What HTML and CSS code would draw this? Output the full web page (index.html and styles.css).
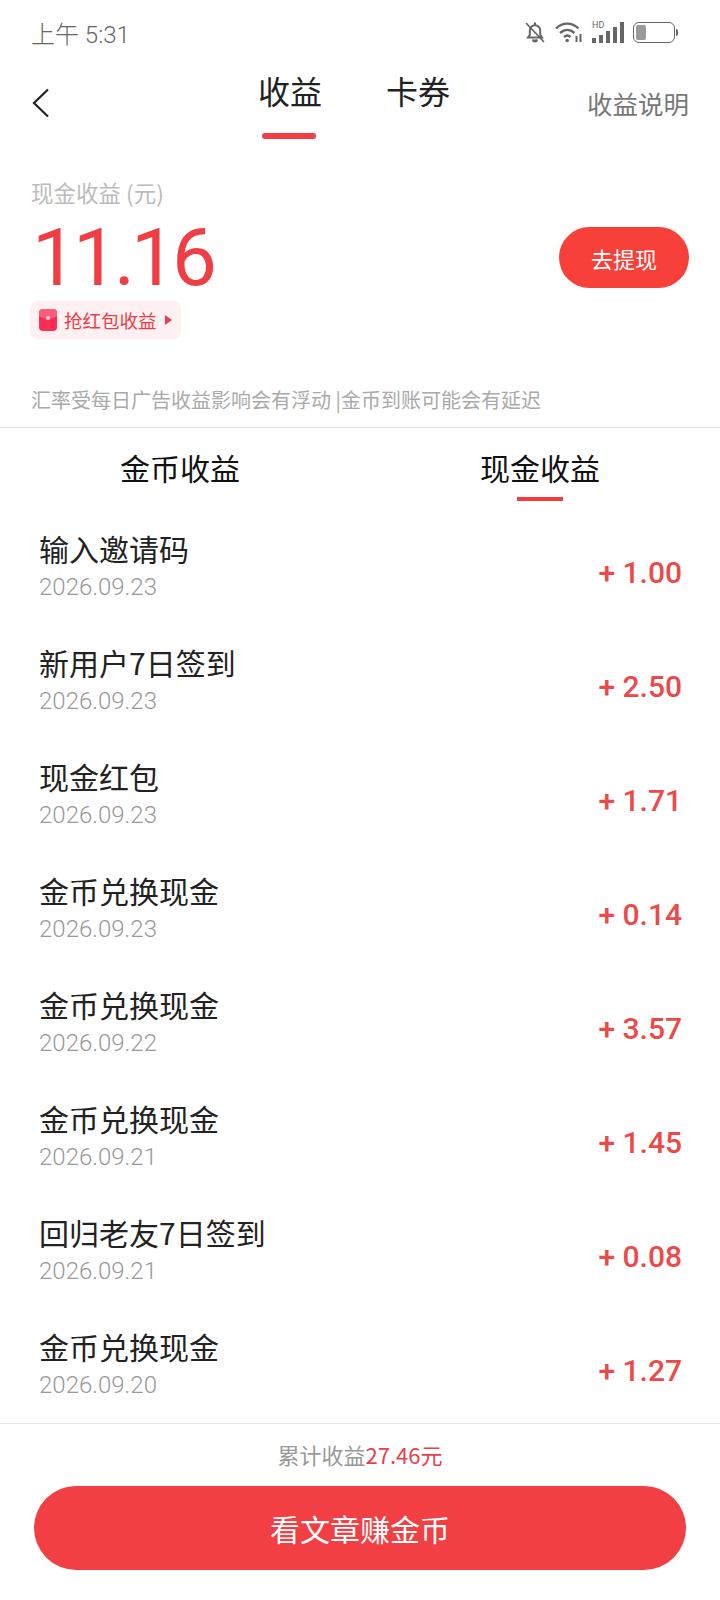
FILE: index.html
```html
<!DOCTYPE html>
<html lang="zh">
<head>
<meta charset="utf-8">
<title>收益</title>
<link rel="stylesheet" href="styles.css">
</head>
<body>
<div class="app">
  <div class="status">
    <span class="time">上午 5:31</span>
    <div class="status-icons">
      <svg class="i-bell" width="22" height="22" viewBox="0 0 22 22" fill="none" stroke="#666" stroke-width="2"><path d="M4 16.5h14l-1.8-2.6V9.5a5.2 5.2 0 0 0-10.400 0v4.400z"/><path d="M9 18.500a2 2 0 0 0 4 0" fill="#666"/><path d="M11 1.500v2.500"/><path d="M2 2l18 19" stroke-width="1.800"/></svg>
      <svg class="i-wifi" width="28" height="21" viewBox="0 0 28 21" fill="none" stroke="#666" stroke-width="2.400"><path d="M1 6.500c6.500-6.500 16-6.500 22.500 0"/><path d="M5 11c4.500-4 10-4 14.500 0"/><path d="M9 15c2-1.800 4.500-1.800 6.500 0"/><circle cx="12.200" cy="18.500" r="1.800" fill="#666" stroke="none"/><path d="M21.500 14v6M25.500 12v8" stroke-width="2"/></svg>
      <div class="signal">
        <span class="hd">HD</span>
        <i class="b1"></i><i class="b2"></i><i class="b3"></i><i class="b4"></i><i class="b5"></i>
      </div>
      <div class="battery"><span class="cell"><b></b></span><span class="nub"></span></div>
    </div>
  </div>
  <div class="nav">
    <svg class="back" width="18" height="30" viewBox="0 0 18 30" fill="none" stroke="#222" stroke-width="2.200"><path d="M16 1.500L2 15l14 13.500"/></svg>
    <div class="nav-tabs">
      <div class="nav-tab active"><span>收益</span></div>
      <div class="nav-tab"><span>卡券</span></div>
    </div>
    <span class="nav-link">收益说明</span>
  </div>
  <section class="summary">
    <div class="sum-left">
      <div class="sum-label">现金收益 (元)</div>
      <div class="sum-value">11.16</div>
      <div class="badge">
        <svg width="18" height="22" viewBox="0 0 18 22"><rect width="18" height="22" rx="4" fill="#fb2f55"/><path d="M0 4a4 4 0 0 1 4-4h10a4 4 0 0 1 4 4v3c-5 3.500-13 3.500-18 0z" fill="#ff5f78"/><circle cx="9" cy="9" r="2" fill="#ffd9de"/></svg>
        <span>抢红包收益</span>
        <i class="tri"></i>
      </div>
    </div>
    <button class="withdraw">去提现</button>
  </section>
  <p class="note">汇率受每日广告收益影响会有浮动 |金币到账可能会有延迟</p>
  <div class="tabs">
    <div class="tab"><span>金币收益</span></div>
    <div class="tab active"><span>现金收益</span></div>
  </div>
  <div class="list">
    <div class="row"><div class="r-text"><div class="r-title">输入邀请码</div><div class="r-date">2026.09.23</div></div><div class="r-amt">+ 1.00</div></div>
    <div class="row"><div class="r-text"><div class="r-title">新用户7日签到</div><div class="r-date">2026.09.23</div></div><div class="r-amt">+ 2.50</div></div>
    <div class="row"><div class="r-text"><div class="r-title">现金红包</div><div class="r-date">2026.09.23</div></div><div class="r-amt">+ 1.71</div></div>
    <div class="row"><div class="r-text"><div class="r-title">金币兑换现金</div><div class="r-date">2026.09.23</div></div><div class="r-amt">+ 0.14</div></div>
    <div class="row"><div class="r-text"><div class="r-title">金币兑换现金</div><div class="r-date">2026.09.22</div></div><div class="r-amt">+ 3.57</div></div>
    <div class="row"><div class="r-text"><div class="r-title">金币兑换现金</div><div class="r-date">2026.09.21</div></div><div class="r-amt">+ 1.45</div></div>
    <div class="row"><div class="r-text"><div class="r-title">回归老友7日签到</div><div class="r-date">2026.09.21</div></div><div class="r-amt">+ 0.08</div></div>
    <div class="row"><div class="r-text"><div class="r-title">金币兑换现金</div><div class="r-date">2026.09.20</div></div><div class="r-amt">+ 1.27</div></div>
  </div>
  <div class="gap"></div>
  <footer class="foot">
    <div class="total">累计收益<em>27.46元</em></div>
    <button class="cta">看文章赚金币</button>
  </footer>
</div>
</body>
</html>
```
FILE: styles.css
```css
* { box-sizing: border-box; }
html, body { margin: 0; padding: 0; background: #fff; }
body { font-family: "Noto Sans CJK SC", Roboto, sans-serif; color: #222; }
.app { width: 720px; height: 1600px; display: flex; flex-direction: column; overflow: hidden; }

.status { height: 64px; padding: 0 42px 0 31px; display: flex; align-items: center; justify-content: space-between; }
.time { font-size: 24px; color: #666; font-family: Roboto, "Noto Sans CJK SC", sans-serif; font-weight: 300; }
.status-icons { display: flex; align-items: center; gap: 9px; }
.signal { width: 32px; height: 21px; display: flex; align-items: flex-end; gap: 2.500px; position: relative; }
.signal i { width: 4.500px; background: #666; display: block; }
.b1 { height: 5px; } .b2 { height: 8px; } .b3 { height: 12px; } .b4 { height: 16px; } .b5 { height: 21px; }
.hd { position: absolute; left: 0; top: -2px; font: 9px/10px Roboto, sans-serif; color: #666; }
.battery { display: flex; align-items: center; gap: 1px; }
.cell { width: 42px; height: 21px; border: 1.500px solid #666; border-radius: 6px; padding: 2px; display: block; }
.cell b { display: block; width: 10px; height: 100%; background: #9a9a9a; border-radius: 2px; }
.nub { width: 2px; height: 7px; background: #666; border-radius: 0 2px 2px 0; display: block; }

.nav { height: 76px; position: relative; padding: 0 31px 0 32px; display: flex; align-items: center; justify-content: space-between; }
.back { margin-top: 1px; }
.nav-tabs { position: absolute; left: 258px; top: 0; display: flex; gap: 64px; }
.nav-tab { height: 75px; font-size: 32px; line-height: 52px; position: relative; width: 64px; text-align: center; color: #222; }
.nav-tab.active::after { content: ""; position: absolute; left: 4px; top: 69px; width: 54px; height: 6px; background: #ef3f44; border-radius: 3px; }
.nav-link { font-size: 25.500px; color: #777; }

.summary { padding: 0 31px 0 30px; display: flex; justify-content: space-between; align-items: flex-start; height: 250px; }
.sum-label { font-size: 22.500px; line-height: 32px; color: #bbb; margin: 36px 0 0 1px; }
.sum-value { font: 400 80px/60px Roboto, sans-serif; color: #ef3f44; margin: 20px 0 0 2px; letter-spacing: -4px; }
.badge { display: inline-flex; align-items: center; gap: 7px; height: 38px; padding: 0 9px; margin-top: 13px; background: #fff0f1; border-radius: 8px; color: #e8404a; font-size: 18.500px; }
.tri { width: 0; height: 0; border-left: 7px solid #e8404a; border-top: 5px solid transparent; border-bottom: 5px solid transparent; margin-left: 1px; }
.withdraw { width: 130px; height: 61px; margin-top: 87px; border: 0; border-radius: 31px; background: #f7403a; color: #fff; font: 22px "Noto Sans CJK SC", sans-serif; padding: 0; }

.note { margin: 0; height: 38px; padding: 0 31px; font-size: 20px; line-height: 20px; color: #aaa; border-bottom: 1px solid #e2e2e2; }

.tabs { height: 74px; display: flex; }
.tab { width: 360px; font-size: 30px; line-height: 78px; position: relative; text-align: center; color: #111; }
.tab.active::after { content: ""; position: absolute; left: 157px; top: 69px; width: 46px; height: 4px; background: #f23c3c; }

.list { height: 891px; overflow: hidden; padding: 22px 38px 0 39px; }
.row { height: 114px; display: flex; justify-content: space-between; align-items: flex-start; }
.r-title { font-size: 30px; line-height: 42px; color: #222; margin-top: 3px; }
.r-date { font: 300 24px/30px Roboto, sans-serif; color: #999; margin-top: 3px; }
.r-amt { font: 500 30px/40px Roboto, sans-serif; color: #ec4a4a; margin-top: 29px; }

.gap { height: 31px; border-bottom: 1px solid #e8e8e8; }
.foot { flex: 1; padding: 0 34px; display: flex; flex-direction: column; align-items: stretch; }
.total { text-align: center; font-size: 22px; line-height: 60px; color: #999; }
.total em { font-style: normal; color: #e8404a; }
.cta { height: 84px; margin: 2px 0 0; border: 0; border-radius: 42px; background: #f23f43; color: #fff; font: 30px "Noto Sans CJK SC", sans-serif; padding: 0; }
```
